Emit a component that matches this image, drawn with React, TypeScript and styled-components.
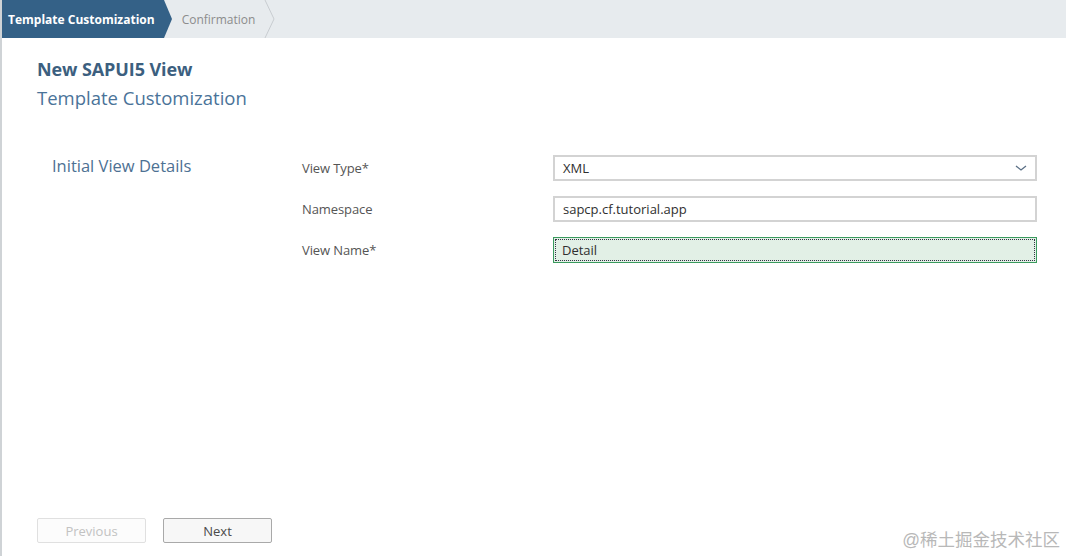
import styled, { createGlobalStyle } from "styled-components";

const GlobalStyle = createGlobalStyle`
  html, body {
    margin: 0;
    padding: 0;
    background: #ffffff;
    font-family: "Open Sans", "Liberation Sans", sans-serif;
  }
  #root {
    height: 100vh;
  }
`;

const Page = styled.div`
  position: relative;
  height: 100vh;
  display: flex;
  flex-direction: column;
  border-left: 2px solid #cfd3d6;
  box-sizing: border-box;
  overflow: hidden;
`;

const StepBar = styled.div`
  height: 38px;
  background-color: #e7ebee;
  display: flex;
  align-items: stretch;
  flex-shrink: 0;
  margin-left: -2px;
`;

const Step = styled.div<{ $active?: boolean }>`
  display: flex;
  align-items: center;
  padding: ${({ $active }) => ($active ? "0 7px 0 8px" : "0 9px 0 8px")};
  font-size: 12px;
  letter-spacing: 0;
  font-weight: ${({ $active }) => ($active ? 700 : 400)};
  color: ${({ $active }) => ($active ? "#ffffff" : "#8c8c8c")};
  background-color: ${({ $active }) => ($active ? "#346187" : "transparent")};
`;

const StepArrow = styled.svg`
  height: 38px;
  width: 12px;
  display: block;
  flex-shrink: 0;
`;

const Content = styled.div`
  flex: 1;
  display: flex;
  flex-direction: column;
  padding: 20px 0 13px 35px;
`;

const Title = styled.h1`
  margin: 0;
  font-size: 18px;
  font-weight: 700;
  color: #3c5f7f;
  letter-spacing: -0.1px;
  line-height: 22px;
`;

const Subtitle = styled.h2`
  margin: 7px 0 0;
  font-size: 18.5px;
  font-weight: 400;
  color: #4a7399;
  line-height: 22px;
`;

const Section = styled.div`
  display: flex;
  margin-top: 46px;
  padding-left: 15px;
`;

const SectionTitle = styled.div`
  width: 250px;
  flex-shrink: 0;
  font-size: 16.5px;
  color: #4d7193;
  line-height: 22px;
`;

const Form = styled.div`
  flex: 1;
  display: grid;
  grid-template-columns: 251px 484px;
  row-gap: 15px;
  align-items: center;
`;

const Label = styled.label`
  font-size: 13px;
  color: #555555;
  letter-spacing: -0.1px;
`;

const Field = styled.div<{ $focused?: boolean }>`
  height: 26px;
  box-sizing: border-box;
  display: flex;
  align-items: center;
  padding: 0 8px;
  font-size: 13px;
  color: #2f2f2f;
  border: ${({ $focused }) =>
    $focused ? "1px solid #3a9a5e" : "2px solid #d3d3d3"};
  background-color: ${({ $focused }) => ($focused ? "#e2f0e6" : "#ffffff")};
  outline: ${({ $focused }) => ($focused ? "1px dotted #334" : "none")};
  outline-offset: -3px;
`;

const Chevron = styled.svg`
  margin-left: auto;
  width: 12px;
  height: 8px;
`;

const Footer = styled.div`
  margin-top: auto;
  display: flex;
  gap: 17px;
`;

const Button = styled.button<{ $disabled?: boolean }>`
  width: 109px;
  height: 25px;
  border-radius: 2px;
  font-family: inherit;
  font-size: 13px;
  background-color: ${({ $disabled }) => ($disabled ? "#fcfcfc" : "#f7f7f7")};
  color: ${({ $disabled }) => ($disabled ? "#c2c2c2" : "#4a4a4a")};
  border: 1px solid ${({ $disabled }) => ($disabled ? "#e0e0e0" : "#a9a9a9")};
  cursor: ${({ $disabled }) => ($disabled ? "default" : "pointer")};
  padding: 0;
`;

const Watermark = styled.div`
  position: absolute;
  right: 6px;
  bottom: 5px;
  font-size: 17.5px;
  color: #b8b8b8;
  font-family: "Liberation Sans", "Noto Sans CJK SC", sans-serif;
`;

const fields = [
  { label: "View Type*", value: "XML", select: true },
  { label: "Namespace", value: "sapcp.cf.tutorial.app" },
  { label: "View Name*", value: "Detail", focused: true },
];

const App = () => {
  return (
    <>
      <GlobalStyle />
      <Page>
        <StepBar>
          <Step $active>Template Customization</Step>
          <StepArrow viewBox="0 0 12 38">
            <polygon points="0,0 2,0 10,19 2,38 0,38" fill="#346187" />
          </StepArrow>
          <Step>Confirmation</Step>
          <StepArrow viewBox="0 0 12 38">
            <polyline
              points="1,0 10,19 1,38"
              fill="none"
              stroke="#c8ccd0"
              strokeWidth="1"
            />
          </StepArrow>
        </StepBar>
        <Content>
          <Title>New SAPUI5 View</Title>
          <Subtitle>Template Customization</Subtitle>
          <Section>
            <SectionTitle>Initial View Details</SectionTitle>
            <Form>
              {fields.map((f) => (
                <>
                  <Label key={f.label + "-l"}>{f.label}</Label>
                  <Field key={f.label + "-f"} $focused={f.focused}>
                    {f.value}
                    {f.select && (
                      <Chevron viewBox="0 0 12 8">
                        <polyline
                          points="1,2 6,6 11,2"
                          fill="none"
                          stroke="#5a6f85"
                          strokeWidth="1.3"
                        />
                      </Chevron>
                    )}
                  </Field>
                </>
              ))}
            </Form>
          </Section>
          <Footer>
            <Button $disabled>Previous</Button>
            <Button>Next</Button>
          </Footer>
        </Content>
        <Watermark>@稀土掘金技术社区</Watermark>
      </Page>
    </>
  );
};

export default App;
